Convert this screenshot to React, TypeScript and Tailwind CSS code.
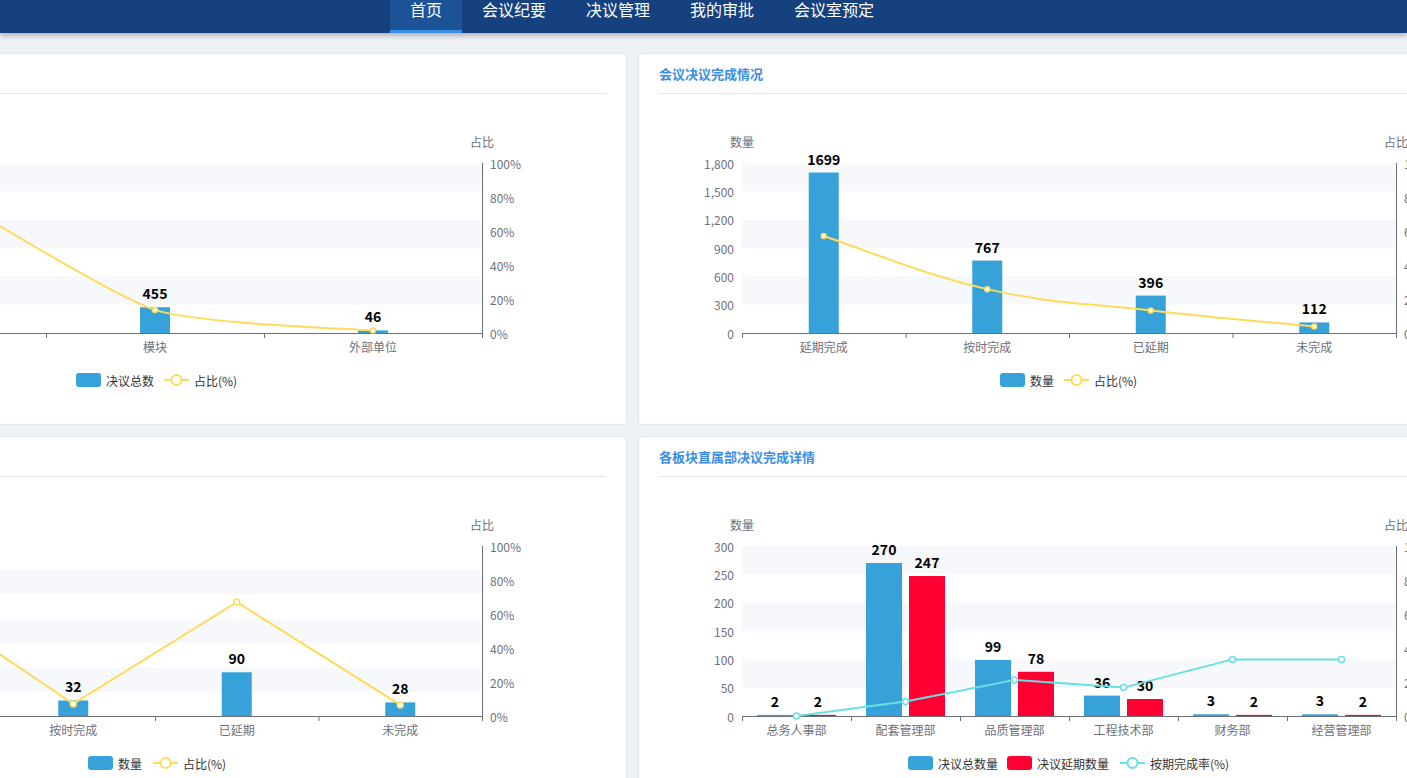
import React from 'react';

const BLUE = '#37a2da';
const YELLOW = '#ffdb5c';
const CYAN = '#67e0e3';
const RED = '#ff0033';
const AXIS = '#6e7079';
const BAND = '#f6f8fb';

// chart geometry, in svg coordinates (svg sits under the 41px title bar)
const X0 = 103;
const X1 = 757;
const TOP = 69;
const BOTTOM = 239;

type BarSeries = { values: number[]; color: string };
type LineSeries = { values: number[]; color: string; smooth: number; r: number };
type LegendItem = { kind: 'bar' | 'line'; color: string; label: string; x: number };

type ChartProps = {
  categories: string[];
  leftMax: number;
  leftSplits: number;
  leftFormat?: (v: number) => string;
  bars: BarSeries[];
  barWidth: number;
  barGap: number;
  line: LineSeries;
  legend: LegendItem[];
};

const clamp = (v: number, a: number, b: number) => Math.min(Math.max(v, Math.min(a, b)), Math.max(a, b));

// smooth = 0 gives straight segments
function linePath(pts: number[][], s: number) {
  if (!s) return 'M' + pts.map((p) => `${p[0]},${p[1]}`).join('L');
  let d = `M${pts[0][0]},${pts[0][1]}`;
  for (let i = 0; i < pts.length - 1; i++) {
    const p0 = pts[i - 1] || pts[i];
    const p1 = pts[i];
    const p2 = pts[i + 1];
    const p3 = pts[i + 2] || p2;
    // keep control points inside the segment's y range so the curve never overshoots
    const c1 = [p1[0] + (p2[0] - p0[0]) * s, clamp(p1[1] + (p2[1] - p0[1]) * s, p1[1], p2[1])];
    const c2 = [p2[0] - (p3[0] - p1[0]) * s, clamp(p2[1] - (p3[1] - p1[1]) * s, p1[1], p2[1])];
    d += `C${c1[0]},${c1[1]} ${c2[0]},${c2[1]} ${p2[0]},${p2[1]}`;
  }
  return d;
}

function Chart({ categories, leftMax, leftSplits, leftFormat, bars, barWidth, barGap, line, legend }: ChartProps) {
  const h = BOTTOM - TOP;
  const cw = (X1 - X0) / categories.length;
  const step = h / leftSplits;
  const fmt = leftFormat || ((v: number) => v.toLocaleString('en-US'));
  const groupW = bars.length * barWidth + (bars.length - 1) * barGap;

  const linePts = line.values.map((v, i) => [X0 + cw * (i + 0.5), BOTTOM - (v / 100) * h]);

  return (
    <svg width={903} height={331} className="block" style={{ fontFamily: '"Noto Sans CJK SC", "Liberation Sans", sans-serif' }}>
      {/* split area */}
      {Array.from({ length: leftSplits }).map((_, i) =>
        i % 2 === 1 ? (
          <rect key={i} x={X0} y={BOTTOM - (i + 1) * step} width={X1 - X0} height={step} fill={BAND} />
        ) : null
      )}

      {/* axis names */}
      <text x={X0} y={47} textAnchor="middle" dominantBaseline="central" fontSize={12} fill={AXIS}>数量</text>
      <text x={X1} y={47} textAnchor="middle" dominantBaseline="central" fontSize={12} fill={AXIS}>占比</text>

      {/* left axis labels */}
      {Array.from({ length: leftSplits + 1 }).map((_, i) => (
        <text key={i} x={95} y={BOTTOM - i * step} textAnchor="end" dominantBaseline="central" fontSize={12} fill={AXIS}>
          {fmt((leftMax / leftSplits) * i)}
        </text>
      ))}

      {/* right axis */}
      <line x1={X1 + 0.5} y1={TOP} x2={X1 + 0.5} y2={BOTTOM} stroke={AXIS} strokeWidth={1} />
      {[0, 20, 40, 60, 80, 100].map((p) => (
        <text key={p} x={765} y={BOTTOM - (p / 100) * h} dominantBaseline="central" fontSize={12} fill={AXIS}>
          {p}%
        </text>
      ))}

      {/* bars */}
      {bars.map((s, si) =>
        s.values.map((v, i) => {
          const bh = (v / leftMax) * h;
          const x = X0 + cw * (i + 0.5) - groupW / 2 + si * (barWidth + barGap);
          return (
            <g key={`${si}-${i}`}>
              <rect x={x} y={BOTTOM - bh} width={barWidth} height={bh} fill={s.color} />
              <text x={x + barWidth / 2} y={BOTTOM - bh - 8} textAnchor="middle" fontSize={14} fontWeight={700} fill="#000">
                {v}
              </text>
            </g>
          );
        })
      )}

      {/* x axis */}
      <line x1={X0} y1={BOTTOM + 0.5} x2={X1} y2={BOTTOM + 0.5} stroke={AXIS} strokeWidth={1} />
      {Array.from({ length: categories.length + 1 }).map((_, i) => (
        <line key={i} x1={X0 + cw * i + 0.5} y1={BOTTOM} x2={X0 + cw * i + 0.5} y2={BOTTOM + 5} stroke={AXIS} strokeWidth={1} />
      ))}
      {categories.map((c, i) => (
        <text key={c} x={X0 + cw * (i + 0.5)} y={252} textAnchor="middle" dominantBaseline="central" fontSize={12} fill={AXIS}>
          {c}
        </text>
      ))}

      {/* line */}
      <path d={linePath(linePts, line.smooth)} fill="none" stroke={line.color} strokeWidth={2} />
      {linePts.map((p, i) => (
        <circle key={i} cx={p[0]} cy={p[1]} r={line.r} fill="#fff" stroke={line.color} strokeWidth={1.5} />
      ))}

      {/* legend */}
      {legend.map((l) => (
        <g key={l.label}>
          {l.kind === 'bar' ? (
            <rect x={l.x} y={279} width={25} height={14} rx={3} fill={l.color} />
          ) : (
            <g>
              <line x1={l.x} y1={286} x2={l.x + 25} y2={286} stroke={l.color} strokeWidth={2} />
              <circle cx={l.x + 12.5} cy={286} r={5} fill="#fff" stroke={l.color} strokeWidth={2} />
            </g>
          )}
          <text x={l.x + 30} y={286} dominantBaseline="central" fontSize={12} fill="#333">
            {l.label}
          </text>
        </g>
      ))}
    </svg>
  );
}

function Card({ title, children }: { title: string; children: React.ReactNode }) {
  return (
    <div className="w-[903px] h-[372px] shrink-0 bg-white border border-[#e1e5ec] rounded-[4px] overflow-hidden">
      <div className="h-[40px] mx-[20px] flex items-center border-b border-[#e4e7ed]">
        <span className="text-[13px] font-bold text-[#3a8ee6]">{title}</span>
      </div>
      {children}
    </div>
  );
}

const NAV = ['首页', '会议纪要', '决议管理', '我的审批', '会议室预定'];

export default function App() {
  return (
    <div
      className="h-[778px] w-full overflow-hidden bg-[#eef1f6]"
      style={{ fontFamily: '"Noto Sans CJK SC", "Liberation Sans", sans-serif' }}
    >
      <header className="h-[33px] bg-[#15417e] shadow-[0_3px_5px_rgba(0,0,0,0.25)] flex pl-[390px] relative z-10">
        {NAV.map((n, i) => (
          <div
            key={n}
            className={
              i === 0
                ? 'px-5 h-[33px] bg-[#1c5397] border-b-[3px] border-[#3b8eea] text-white text-[16px] leading-[18px]'
                : 'px-5 h-[33px] text-white text-[16px] leading-[18px]'
            }
          >
            {n}
          </div>
        ))}
      </header>

      <div className="flex gap-[11px] -ml-[276px] mt-[20px]">
        <Card title="各类型决议情况">
          <Chart
            categories={['公司', '模块', '外部单位']}
            leftMax={3000}
            leftSplits={6}
            bars={[{ values: [2473, 455, 46], color: BLUE }]}
            barWidth={30}
            barGap={0}
            line={{ values: [85, 13.6, 1.4], color: YELLOW, smooth: 0.1, r: 2.5 }}
            legend={[
              { kind: 'bar', color: BLUE, label: '决议总数', x: 351 },
              { kind: 'line', color: YELLOW, label: '占比(%)', x: 439 },
            ]}
          />
        </Card>
        <Card title="会议决议完成情况">
          <Chart
            categories={['延期完成', '按时完成', '已延期', '未完成']}
            leftMax={1800}
            leftSplits={6}
            bars={[{ values: [1699, 767, 396, 112], color: BLUE }]}
            barWidth={30}
            barGap={0}
            line={{ values: [57.1, 25.8, 13.3, 3.8], color: YELLOW, smooth: 0.2, r: 2.5 }}
            legend={[
              { kind: 'bar', color: BLUE, label: '数量', x: 361 },
              { kind: 'line', color: YELLOW, label: '占比(%)', x: 425 },
            ]}
          />
        </Card>
      </div>

      <div className="flex gap-[11px] -ml-[276px] mt-[11px]">
        <Card title="本月决议完成情况">
          <Chart
            categories={['延期完成', '按时完成', '已延期', '未完成']}
            leftMax={350}
            leftSplits={7}
            bars={[{ values: [64, 32, 90, 28], color: BLUE }]}
            barWidth={30}
            barGap={0}
            line={{ values: [72, 7.1, 67, 6.5], color: YELLOW, smooth: 0, r: 3 }}
            legend={[
              { kind: 'bar', color: BLUE, label: '数量', x: 363 },
              { kind: 'line', color: YELLOW, label: '占比(%)', x: 428 },
            ]}
          />
        </Card>
        <Card title="各板块直属部决议完成详情">
          <Chart
            categories={['总务人事部', '配套管理部', '品质管理部', '工程技术部', '财务部', '经营管理部']}
            leftMax={300}
            leftSplits={6}
            bars={[
              { values: [2, 270, 99, 36, 3, 3], color: BLUE },
              { values: [2, 247, 78, 30, 2, 2], color: RED },
            ]}
            barWidth={36}
            barGap={7}
            line={{ values: [0, 8.5, 21.2, 16.7, 33.3, 33.3], color: CYAN, smooth: 0, r: 3 }}
            legend={[
              { kind: 'bar', color: BLUE, label: '决议总数量', x: 269 },
              { kind: 'bar', color: RED, label: '决议延期数量', x: 368 },
              { kind: 'line', color: CYAN, label: '按期完成率(%)', x: 481 },
            ]}
          />
        </Card>
      </div>
    </div>
  );
}
